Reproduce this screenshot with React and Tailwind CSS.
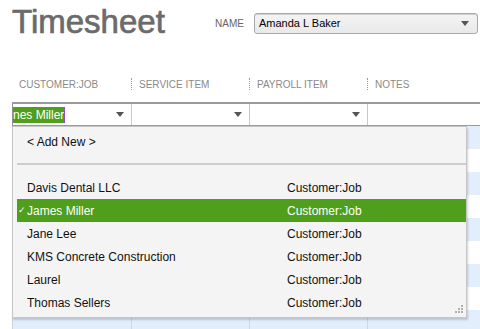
import React from 'react';

const COLS = ['w-[119px]', 'w-[118px]', 'w-[118px]', 'flex-1'];

const HEADERS = ['Customer:Job', 'Service Item', 'Payroll Item', 'Notes'];

const ITEMS = [
  { name: 'Davis Dental LLC', type: 'Customer:Job' },
  { name: 'James Miller', type: 'Customer:Job', selected: true },
  { name: 'Jane Lee', type: 'Customer:Job' },
  { name: 'KMS Concrete Construction', type: 'Customer:Job' },
  { name: 'Laurel', type: 'Customer:Job' },
  { name: 'Thomas Sellers', type: 'Customer:Job' },
];

function Arrow({ className = '' }) {
  return (
    <svg width="8" height="5" viewBox="0 0 8 5" className={className}>
      <path d="M0 0 H8 L4 5 Z" fill="#555" />
    </svg>
  );
}

export default function App() {
  return (
    <div className="relative w-[480px] h-[329px] overflow-hidden bg-white font-['Liberation_Sans',Arial,sans-serif]">
      {/* Title + name */}
      <div className="flex items-start h-[74px]">
        <h1 className="pl-[12px] pt-[5px] text-[33px] leading-none text-[#6b6b6b] [-webkit-text-stroke:0.7px_#6b6b6b]">Timesheet</h1>
        <div className="ml-auto mr-[2px] mt-[13px] flex items-center">
          <span className="text-[10px] text-[#666] mr-[10px]">NAME</span>
          <div className="w-[224px] h-[21px] flex items-center justify-between pl-[4px] pr-[8px] rounded-[3px] border border-[#a9a9a9] bg-gradient-to-b from-[#f4f4f4] to-[#e9e9e9] shadow-[inset_0_1px_0_#d0d0d0]">
            <span className="text-[11px] text-black">Amanda L Baker</span>
            <Arrow />
          </div>
        </div>
      </div>

      {/* Column headers */}
      <div className="flex h-[20px] pl-[12px]">
        {HEADERS.map((h, i) => (
          <div key={h} className={`${COLS[i]} flex items-center`}>
            <span className={`h-[12px] ${i === 0 ? '' : 'border-l border-dotted border-[#999]'}`} />
            <span className="pl-[7px] text-[10px] uppercase text-[#8a8a8a]">{h}</span>
          </div>
        ))}
      </div>

      <div className="h-[8px]" />

      {/* Edit row */}
      <div className="ml-[12px] flex h-[24px] border-t-2 border-b border-[#9a9a9a] bg-white">
        <div className={`${COLS[0]} flex items-center justify-between border-l border-[#8f8f8f] pr-[7px]`}>
          <div className="flex items-center">
            <span className="bg-[#4f9e1c] text-white text-[12px] leading-[16px]">nes Miller</span>
            <span className="w-px h-[16px] bg-[#8a4fd6]" />
          </div>
          <Arrow />
        </div>
        <div className={`${COLS[1]} flex items-center justify-end border-l border-[#c8c8c8] pr-[7px]`}>
          <Arrow />
        </div>
        <div className={`${COLS[2]} flex items-center justify-end border-l border-[#c8c8c8] pr-[7px]`}>
          <Arrow />
        </div>
        <div className={`${COLS[3]} border-l border-[#c8c8c8]`} />
      </div>

      {/* Striped rows */}
      <div className="ml-[12px]">
        {Array.from({ length: 9 }, (_, r) => (
          <div key={r} className={`flex h-[23px] ${r % 2 === 0 ? 'bg-[#e3eefc]' : 'bg-white'}`}>
            {COLS.map((c, i) => (
              <div key={i} className={`${c} border-l ${i === 0 ? 'border-[#c9d3de]' : 'border-[#cfd6de]'}`} />
            ))}
          </div>
        ))}
      </div>

      {/* Dropdown popup */}
      <div className="absolute left-[12px] top-[126px] w-[455px] h-[192px] border border-[#c6c6c6] bg-[#f4f4f4] shadow-[1px_2px_2px_rgba(0,0,0,0.18)] pt-[3px]">
        <div className="ml-[4px] h-[23px] flex items-center pl-[10px] text-[12px] text-[#111]">&lt; Add New &gt;</div>
        <div className="ml-[4px] mt-[10px] h-[2px] bg-[#cdcdcd]" />
        <div className="h-[11px]" />
        {ITEMS.map((it) => (
          <div
            key={it.name}
            className={`ml-[4px] h-[23px] flex items-center text-[12px] ${it.selected ? 'bg-[#4f9e1c] text-white' : 'text-[#111]'}`}
          >
            <span className="w-[10px] pl-[1px] text-[9px] leading-none">{it.selected ? '✓' : ''}</span>
            <span className="w-[260px]">{it.name}</span>
            <span>{it.type}</span>
          </div>
        ))}
        <svg width="9" height="9" viewBox="0 0 9 9" className="absolute right-[2px] bottom-[3px]">
          <g fill="#b0b0b0">
            <rect x="6" y="0" width="2" height="2" />
            <rect x="3" y="3" width="2" height="2" />
            <rect x="6" y="3" width="2" height="2" />
            <rect x="0" y="6" width="2" height="2" />
            <rect x="3" y="6" width="2" height="2" />
            <rect x="6" y="6" width="2" height="2" />
          </g>
        </svg>
      </div>
    </div>
  );
}
